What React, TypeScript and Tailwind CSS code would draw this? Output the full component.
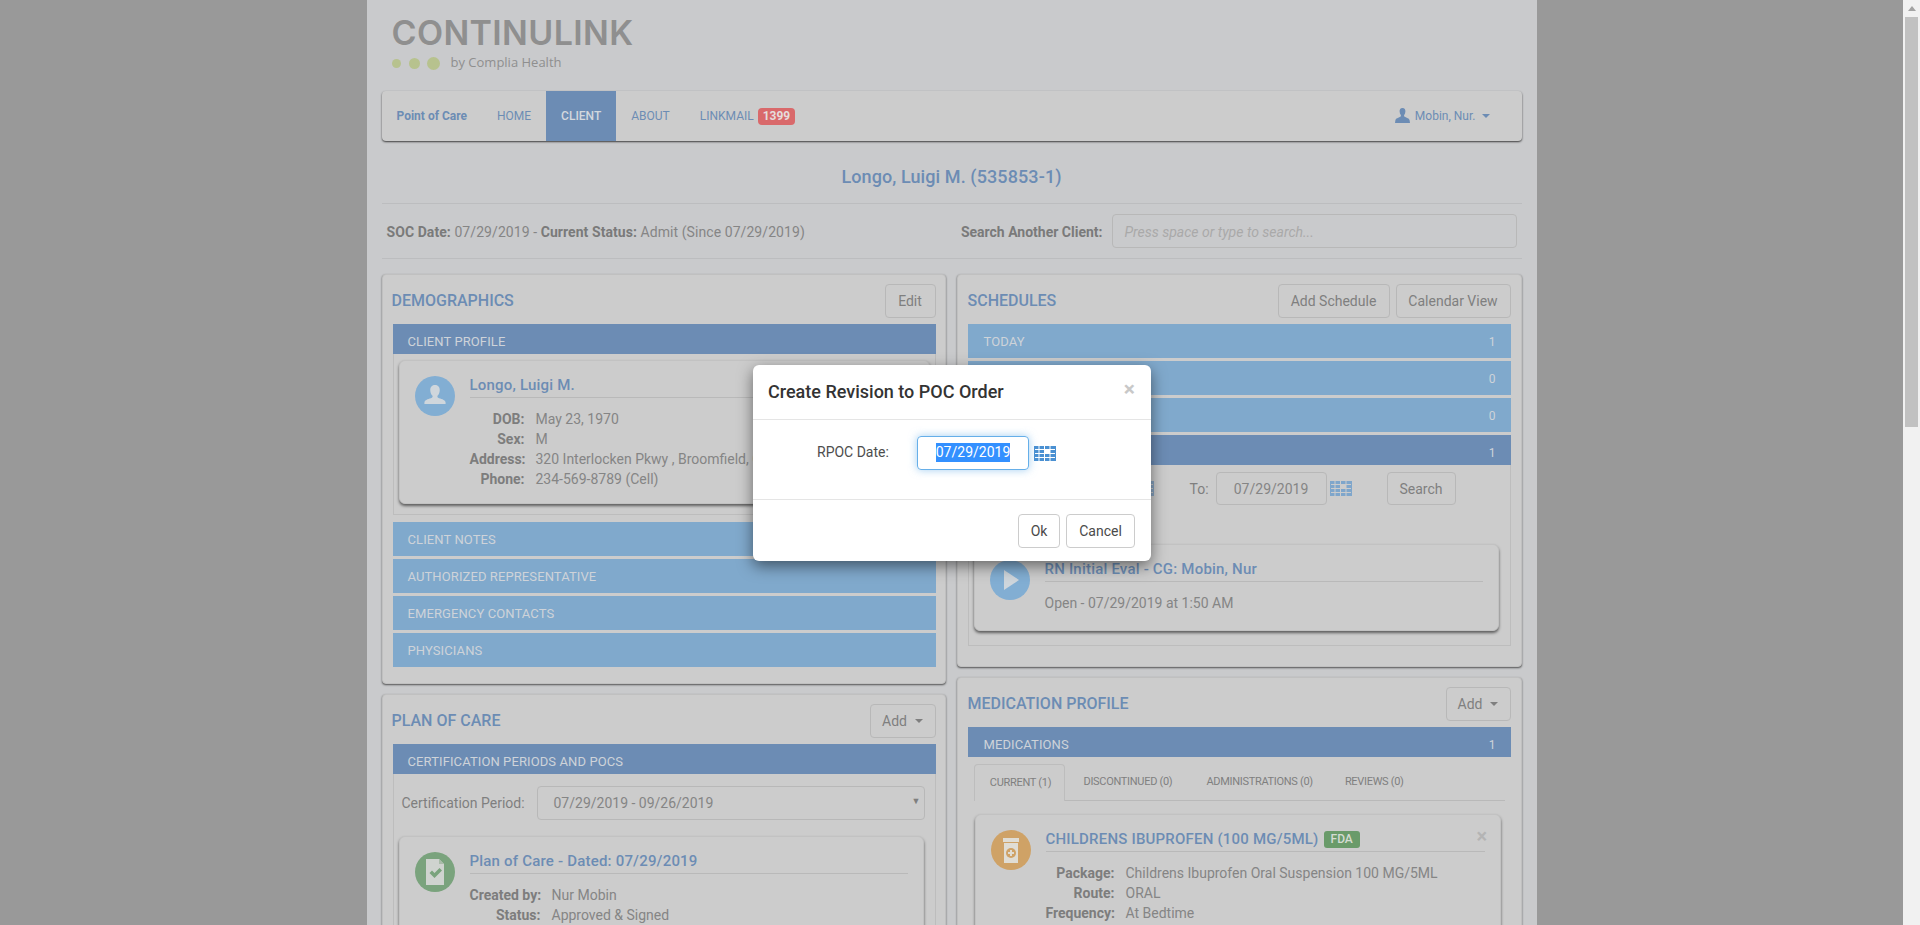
import type { ReactNode } from 'react'

function CalendarIcon({ color = '#4a90d2' }: { color?: string }) {
  const cells = []
  for (let r = 0; r < 4; r++) {
    for (let c = 0; c < 4; c++) {
      if (r === 1 && c === 2) continue
      cells.push(<rect key={`${r}-${c}`} x={c * 5.5} y={r * 4} width={4.5} height={3} fill={color} />)
    }
  }
  return (
    <svg width="22" height="15" viewBox="0 0 22 15" className="shrink-0">
      {cells}
      <rect x="0" y="0" width="1" height="15" fill={color} />
      <rect x="21" y="0" width="1" height="15" fill={color} />
    </svg>
  )
}

function Caret({ color = '#7f7f7f', className = 'ml-[8px]' }: { color?: string; className?: string }) {
  return <span className={`inline-block h-0 w-0 border-x-4 border-t-4 border-x-transparent align-middle ${className}`} style={{ borderTopColor: color }} />
}

function Btn({ children, className = '' }: { children: ReactNode; className?: string }) {
  return (
    <div className={`flex h-[34px] items-center justify-center rounded border border-[#b8b8b8] text-sm text-[#7f7f7f] ${className}`}>
      {children}
    </div>
  )
}

function Bar({ label, count, dark, inset }: { label: string; count?: number; dark?: boolean; inset?: boolean }) {
  return (
    <div
      className={`flex items-center justify-between px-[15px] text-[13px] uppercase tracking-[0.1px] text-[#ced3d9] ${
        dark ? 'h-[30px] bg-[#6c8cb4] pt-[6px]' : 'h-[34px] bg-[#80a9cc] pt-[2px]'
      }`}
    >
      <span className={inset ? 'ml-px' : ''}>{label}</span>
      {count !== undefined && <span className="text-xs">{count}</span>}
    </div>
  )
}

function Panel({ title, actions, children, className = '', titleClass = '' }: { title: string; actions: ReactNode; children: ReactNode; className?: string; titleClass?: string }) {
  return (
    <section className={`rounded border border-[#c0c0c0] bg-[#cccccc] px-[10px] pt-[9px] shadow-[0_1px_2px_rgba(0,0,0,0.6)] ${className}`}>
      <div className="mb-[6px] flex h-[34px] items-center justify-between">
        <h2 className={`text-base font-medium uppercase text-[#6c8cb4] ${titleClass}`}>{title}</h2>
        <div className="flex gap-[6px]">{actions}</div>
      </div>
      {children}
    </section>
  )
}

function Card({ icon, title, children, className = '', titleExtra }: { icon: ReactNode; title: string; children: ReactNode; className?: string; titleExtra?: ReactNode }) {
  return (
    <div className={`flex rounded-md border border-[#c2c2c2] bg-[#cccccc] px-[15px] pt-[15px] shadow-[0_2px_3px_rgba(0,0,0,0.55)] ${className}`}>
      <div className="mr-[15px] h-10 w-10 shrink-0">{icon}</div>
      <div className="min-w-0 flex-1">
        <div className="flex h-[22px] items-center gap-[5px] border-b border-[#b9b9b9] pb-[2px] text-[15px] font-medium tracking-[0.2px] text-[#6c8cb4]">
          <span className="whitespace-nowrap">{title}</span>
          {titleExtra}
        </div>
        <div className="pt-[11px]">{children}</div>
      </div>
    </div>
  )
}

function Row({ label, value, labelWidth }: { label: string; value: string; labelWidth: string }) {
  return (
    <div className="flex h-5 items-center text-sm leading-5">
      <span className={`shrink-0 whitespace-nowrap text-right font-bold text-[#7d7d7d] ${labelWidth}`}>{label}</span>
      <span className="ml-[11px] whitespace-nowrap text-[#858585]">{value}</span>
    </div>
  )
}

function Circle({ color, children }: { color: string; children: ReactNode }) {
  return (
    <svg width="40" height="40" viewBox="0 0 40 40">
      <circle cx="20" cy="20" r="20" fill={color} />
      {children}
    </svg>
  )
}

function Logo() {
  return (
    <div className="h-[91px] pl-[9px] pt-[15px]">
      <div className="ml-px text-[34px] font-semibold leading-[36px] tracking-[0.35px] text-[#8f8f8f] [font-family:Inter,sans-serif]">CONTINULINK</div>
      <div className="mt-[2px] flex h-5 items-center">
        <span className="ml-px h-[9px] w-[9px] rounded-full bg-[#b7c28e]" />
        <span className="ml-[8px] h-[11px] w-[11px] rounded-full bg-[#b7c28e]" />
        <span className="ml-[7px] h-[13px] w-[13px] rounded-full bg-[#b7c28e]" />
        <span className="ml-[11px] text-[13px] text-[#8f8f8f] [font-family:'Open_Sans',sans-serif]">by Complia Health</span>
      </div>
    </div>
  )
}

function Navbar() {
  const link = 'px-[15px] flex items-center text-xs text-[#6c8cb4]'
  return (
    <nav className="flex h-[50px] items-stretch justify-between rounded bg-[#cccccc] shadow-[0_1px_2px_rgba(0,0,0,0.7)]">
      <div className="flex items-stretch">
        <div className="flex items-center pl-[15px] pr-[15px] text-xs font-bold text-[#6c8cb4]">Point of Care</div>
        <div className={link}>HOME</div>
        <div className="flex items-center bg-[#6c8cb4] px-[15px] text-xs font-medium text-[#d3d8de]">CLIENT</div>
        <div className={link}>ABOUT</div>
        <div className={link}>
          LINKMAIL
          <span className="ml-[4px] rounded-[4px] bg-[#d9696b] px-[5px] py-[1px] text-xs font-bold leading-[15px] text-[#e6dcdc]">1399</span>
        </div>
      </div>
      <div className="flex items-center pr-[32px] text-xs text-[#6c8cb4]">
        <svg width="15" height="15" viewBox="0 0 15 15" className="mr-[5px] -mt-[2px]">
          <path d="M7.5 0C5.4 0 4.4 1.5 4.6 3.6c.1 1.3.5 2.6 1.2 3.5.3.4.2 1.3-.4 1.6C3.6 9.6.6 10.400.4 12.300L0 15h15l-.4-2.700c-.2-1.900-3.200-2.700-5-3.600-.6-.3-.7-1.200-.4-1.600.7-.9 1.100-2.200 1.200-3.500C10.600 1.500 9.600 0 7.500 0z" fill="#6c8cb4" />
        </svg>
        Mobin, Nur.
        <Caret color="#6c8cb4" className="ml-[6px]" />
      </div>
    </nav>
  )
}

function Demographics() {
  return (
    <Panel title="Demographics" titleClass="-ml-px" actions={<Btn className="w-[51px]">Edit</Btn>} className="h-[410px] pr-[9px]">
      <Bar label="Client Profile" dark />
      <div className="h-[161px] border border-t-0 border-[#bdbdbd] px-[5px] pt-[6px]">
        <Card
          className="h-[144px]"
          title="Longo, Luigi M."
          icon={
            <Circle color="#82aed3">
              <path d="M20 9c-3.400 0-5 2.600-4.700 5.700.2 2 .9 3.700 2 4.900.5.600.4 1.700-.4 2.100-2.400 1.100-7 1.800-7.400 4.300-.1.700-.1 1.300-.1 1.900h21.200c0-.6 0-1.200-.1-1.900-.4-2.500-5-3.200-7.400-4.300-.8-.4-.9-1.500-.4-2.100 1.100-1.200 1.800-2.900 2-4.900C25 11.600 23.400 9 20 9z" fill="#cfd6dc" />
            </Circle>
          }
        >
          <Row labelWidth="w-[55px]" label="DOB:" value="May 23, 1970" />
          <Row labelWidth="w-[55px]" label="Sex:" value="M" />
          <Row labelWidth="w-[55px]" label="Address:" value="320 Interlocken Pkwy , Broomfield, CO 80021" />
          <Row labelWidth="w-[55px]" label="Phone:" value="234-569-8789 (Cell)" />
        </Card>
      </div>
      <div className="mt-[7px] flex flex-col gap-[3px]">
        <Bar label="Client Notes" />
        <Bar label="Authorized Representative" />
        <Bar label="Emergency Contacts" />
        <Bar label="Physicians" />
      </div>
    </Panel>
  )
}

function PlanOfCare() {
  return (
    <Panel
      title="Plan of Care"
      titleClass="-ml-px"
      className="mt-[10px] pr-[9px]"
      actions={
        <Btn className="w-[66px]">
          Add
          <Caret />
        </Btn>
      }
    >
      <Bar label="Certification Periods and POCs" dark />
      <div className="border border-t-0 border-[#bdbdbd] px-[5px] pb-4 pt-3">
        <div className="flex items-center pl-[3px] pr-[5px]">
          <span className="w-[135px] shrink-0 text-sm text-[#7f7f7f]">Certification Period:</span>
          <div className="relative flex h-[34px] flex-1 items-center rounded border border-[#b8b8b8] pl-4 text-sm text-[#858585]">
            07/29/2019 - 09/26/2019
            <span className="absolute right-[3px] top-[8px] text-[9px] text-[#7f7f7f]">▼</span>
          </div>
        </div>
        <Card
          className="mt-4 h-[200px] w-[525px]"
          title="Plan of Care - Dated: 07/29/2019"
          icon={
            <Circle color="#7aa37d">
              <path d="M11 7h13l5 5v21H11z" fill="#cfd3cf" />
              <path d="M24 7v5h5z" fill="#a9bba9" />
              <path d="M14.500 21l2.500-2.500 2.500 2.500 5-5 2.500 2.500-7.500 7.500z" fill="#7aa37d" />
            </Circle>
          }
        >
          <Row labelWidth="w-[71px]" label="Created by:" value="Nur Mobin" />
          <Row labelWidth="w-[71px]" label="Status:" value="Approved & Signed" />
        </Card>
      </div>
    </Panel>
  )
}

function Schedules() {
  return (
    <Panel
      title="Schedules"
      className="h-[393px]"
      actions={
        <>
          <Btn className="w-[112px]">Add Schedule</Btn>
          <Btn className="w-[115px]">Calendar View</Btn>
        </>
      }
    >
      <div className="flex flex-col gap-[3px]">
        <Bar inset label="Today" count={1} />
        <Bar inset label="Overdue" count={0} />
        <Bar inset label="Upcoming" count={0} />
        <Bar inset label="Search" count={1} dark />
      </div>
      <div className="h-[181px] border border-t-0 border-[#bdbdbd] px-[5px] pt-[7px]">
        <div className="flex h-[33px] items-center">
          <span className="w-[41px] text-sm text-[#7f7f7f]">From:</span>
          <div className="ml-[3px] flex h-[33px] w-[111px] items-center justify-center rounded border border-[#b8b8b8] text-sm text-[#858585]">07/29/2019</div>
          <span className="ml-[3px] opacity-70">
            <CalendarIcon color="#6c94bd" />
          </span>
          <span className="ml-[36px] w-[26px] text-sm text-[#7f7f7f]">To:</span>
          <div className="flex h-[33px] w-[111px] items-center justify-center rounded border border-[#b8b8b8] text-sm text-[#858585]">07/29/2019</div>
          <span className="ml-[3px]">
            <CalendarIcon color="#7fa6cb" />
          </span>
          <Btn className="ml-[35px] !h-[33px] w-[69px]">Search</Btn>
        </div>
        <Card
          className="mt-[39px] h-[87px] w-[525px]"
          title="RN Initial Eval - CG: Mobin, Nur"
          icon={
            <Circle color="#82aed3">
              <path d="M14 10l15 10-15 10z" fill="#cfd6dc" />
            </Circle>
          }
        >
          <div className="text-sm leading-5 text-[#858585]">Open - 07/29/2019 at 1:50 AM</div>
        </Card>
      </div>
    </Panel>
  )
}

function MedicationProfile() {
  return (
    <Panel
      title="Medication Profile"
      className="mt-[10px]"
      actions={
        <Btn className="w-[65px]">
          Add
          <Caret />
        </Btn>
      }
    >
      <Bar inset label="Medications" count={1} dark />
      <div className="px-[6px] pt-[7px]">
        <div className="flex h-[37px] items-stretch border-b border-[#b9b9b9] text-[11px] tracking-[-0.3px] text-[#7f7f7f]">
          <div className="-mb-px flex w-[91px] items-center justify-center rounded-t border border-b-0 border-[#bdbdbd] bg-[#cccccc] pl-[3px] pt-px">CURRENT (1)</div>
          <div className="flex items-center pl-[19px] pr-[17px] pt-px">DISCONTINUED (0)</div>
          <div className="flex items-center px-[17px] pt-px">ADMINISTRATIONS (0)</div>
          <div className="flex items-center pl-[15px] pr-[17px] pt-px">REVIEWS (0)</div>
        </div>
        <div className="relative">
          <Card
            className="ml-px mt-[13px] h-[200px] w-[526px]"
            title="CHILDRENS IBUPROFEN (100 MG/5ML)"
            titleExtra={<span className="rounded-[3px] bg-[#6a9b6a] px-[7px] text-xs font-medium leading-[17px] tracking-normal text-[#d5dcd3]">FDA</span>}
            icon={
              <Circle color="#cfa266">
                <path d="M12 8h16v4H12z" fill="#e0ddd4" />
                <path d="M13 13h14v20H13z" fill="#e0ddd4" />
                <circle cx="20" cy="23" r="5" fill="#cfa266" />
                <path d="M19 20h2v2h2v2h-2v2h-2v-2h-2v-2h2z" fill="#e0ddd4" />
              </Circle>
            }
          >
            <Row labelWidth="w-[69px]" label="Package:" value="Childrens Ibuprofen Oral Suspension 100 MG/5ML" />
            <Row labelWidth="w-[69px]" label="Route:" value="ORAL" />
            <Row labelWidth="w-[69px]" label="Frequency:" value="At Bedtime" />
          </Card>
          <span className="absolute left-[503px] top-[12px] text-xl font-bold leading-5 text-[#b4b4b4]">×</span>
        </div>
      </div>
    </Panel>
  )
}

function RevisionModal() {
  return (
    <div className="absolute left-[753px] top-[365px] w-[398px] rounded-md bg-white shadow-[0_5px_15px_rgba(0,0,0,0.5)]">
      <div className="relative flex h-[55px] items-center border-b border-[#e5e5e5] pl-[15px]">
        <h3 className="text-lg font-medium text-[#333333]">Create Revision to POC Order</h3>
        <span className="absolute right-[16px] top-[14px] text-[21px] font-bold leading-[21px] text-[#c8c8c8]">×</span>
      </div>
      <div className="flex h-[80px] border-b border-[#e5e5e5] pt-[16px]">
        <label className="ml-[64px] mt-[6px] w-[100px] text-sm text-[#4d4d4d]">RPOC Date:</label>
        <div className="flex h-[34px] w-[112px] items-center justify-center rounded border border-[#66afe9] pb-[2px] shadow-[0_0_8px_rgba(102,175,233,0.6)]">
          <span className="bg-[#3390ff] text-sm leading-[19px] text-white">07/29/2019</span>
        </div>
        <span className="ml-[5px] mt-[10px]">
          <CalendarIcon />
        </span>
      </div>
      <div className="flex justify-end gap-[6px] px-[16px] pb-[13px] pt-[14px]">
        <div className="flex h-[34px] w-[42px] items-center justify-center rounded border border-[#cccccc] text-sm text-[#4a4a4a]">Ok</div>
        <div className="flex h-[34px] w-[69px] items-center justify-center rounded border border-[#cccccc] text-sm text-[#4a4a4a]">Cancel</div>
      </div>
    </div>
  )
}

export default function App() {
  return (
    <div className="relative flex h-[925px] overflow-hidden bg-[#999999] [font-family:Roboto,sans-serif]">
      <main className="flex flex-1 justify-center">
        <div className="h-[925px] w-[1170px] overflow-hidden bg-[#c9cacc] px-[15px]">
          <Logo />
          <Navbar />
          <h1 className="flex h-[63px] items-center justify-center border-b border-[#bcbdbf] pt-[9px] text-lg font-medium tracking-[0.1px] text-[#6c8cb4]">Longo, Luigi M. (535853-1)</h1>
          <div className="flex h-[55px] items-center justify-between border-b border-[#bcbdbf] px-[5px]">
            <p className="mt-[2px] text-sm tracking-[0.07px] text-[#858585]">
              <b className="font-bold text-[#7a7a7a]">SOC Date:</b> 07/29/2019 - <b className="font-bold text-[#7a7a7a]">Current Status:</b> Admit (Since 07/29/2019)
            </p>
            <div className="flex items-center">
              <span className="mr-[9px] mt-[2px] text-sm font-bold text-[#7a7a7a]">Search Another Client:</span>
              <div className="flex h-[34px] w-[405px] items-center rounded border border-[#b8b8b8] pl-3 pt-[2px] text-sm italic text-[#a9a9a9]">Press space or type to search...</div>
            </div>
          </div>
          <div className="mt-[15px] flex gap-[11px]">
            <div className="w-[564px]">
              <Demographics />
              <PlanOfCare />
            </div>
            <div className="w-[565px]">
              <Schedules />
              <MedicationProfile />
            </div>
          </div>
        </div>
      </main>
      <aside className="flex w-[17px] flex-col items-center bg-[#f1f1f1]">
        <div className="mt-[6px] h-0 w-0 border-x-[4px] border-b-[5px] border-x-transparent border-b-[#a3a3a3]" />
        <div className="mt-[6px] h-[410px] w-[13px] bg-[#c1c1c1]" />
      </aside>
      <RevisionModal />
    </div>
  )
}
